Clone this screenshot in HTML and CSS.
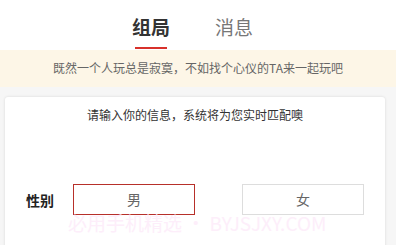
FILE: index.html
```html
<!DOCTYPE html>
<html lang="zh">
<head>
<meta charset="utf-8">
<link rel="stylesheet" href="styles.css">
</head>
<body>
<div class="page">
  <div class="tabs">
    <div class="tab active">组局<span class="bar"></span></div>
    <div class="tab">消息</div>
  </div>
  <div class="banner">既然一个人玩总是寂寞，不如找个心仪的TA来一起玩吧</div>
  <div class="main">
    <div class="card">
      <div class="intro">请输入你的信息，系统将为您实时匹配噢</div>
      <div class="row">
        <div class="label">性别</div>
        <div class="opts">
          <div class="opt selected">男</div>
          <div class="opt">女</div>
        </div>
      </div>
      <div class="wm">必用手机精选 • BYJSJXY.COM</div>
    </div>
  </div>
</div>
</body>
</html>
```
FILE: styles.css
```css
* { box-sizing: border-box; }
html, body { margin: 0; padding: 0; }
body {
  width: 396px; height: 245px; overflow: hidden;
  font-family: "Noto Sans CJK SC", "Noto Sans", sans-serif;
  background: #f6f6f6;
}
.tabs {
  height: 50px; background: #fff;
  display: flex; gap: 45px;
  padding-left: 132px;
}
.tab {
  position: relative;
  font-size: 19px; line-height: 54px; height: 50px;
  color: #777;
}
.tab.active { color: #333; font-weight: 700; }
.bar {
  position: absolute; left: 3px; right: 3px; bottom: 1px;
  height: 2px; background: #d8312b;
}
.banner {
  height: 37px; background: #fdf6e7;
  text-align: center; font-size: 12px; line-height: 36px; color: #666;
}
.main { padding: 10px 11px 0 5px; }
.card {
  background: #fff; height: 160px;
  border-radius: 3px;
  box-shadow: 0 0 3px rgba(0,0,0,0.12);
  padding-top: 9px;
  position: relative;
}
.intro {
  text-align: center; font-size: 12px; line-height: 18px; color: #333;
}
.row {
  display: flex; align-items: center;
  margin-top: 60px; padding: 0 21px;
}
.label { font-size: 14px; font-weight: 700; color: #222; width: 47px; }
.opts { flex: 1; display: flex; justify-content: space-between; }
.opt {
  width: 122px; height: 31px;
  border: 1px solid #ddd;
  text-align: center; line-height: 29px; font-size: 14px; color: #666;
}
.opt.selected { border-color: #b7302a; }
.wm {
  position: absolute; left: 63px; top: 115px;
  font-size: 19px; line-height: 22px; color: #fdeefa;
  white-space: nowrap;
}
```
